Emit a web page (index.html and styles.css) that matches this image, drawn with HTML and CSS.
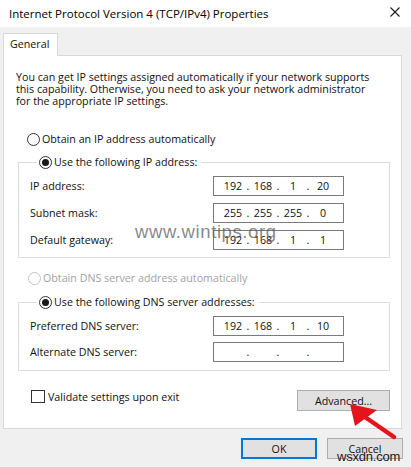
FILE: index.html
```html
<!DOCTYPE html>
<html lang="en">
<head>
<meta charset="utf-8">
<title>Internet Protocol Version 4 (TCP/IPv4) Properties</title>
<link rel="stylesheet" href="styles.css">
</head>
<body>
<div class="window">
  <div class="titlebar">
    <span class="title">Internet Protocol Version 4 (TCP/IPv4) Properties</span>
    <svg class="close" width="10" height="10" viewBox="0 0 10 10"><path d="M0.5 0.5 L9.5 9.5 M9.5 0.5 L0.5 9.5" stroke="#1a1a1a" stroke-width="1.1" fill="none"/></svg>
  </div>
  <div class="content">
    <div class="tabs"><div class="tab">General</div></div>
    <div class="panel">
      <p class="intro">You can get IP settings assigned automatically if your network supports<br>this capability. Otherwise, you need to ask your network administrator<br>for the appropriate IP settings.</p>

      <div class="option first"><span class="radio"></span><span>Obtain an IP address automatically</span></div>

      <fieldset class="group ip-group">
        <legend><span class="radio checked"></span><span>Use the following IP address:</span></legend>
        <div class="row"><span class="label">IP address:</span><div class="ipbox"><span class="oct">192</span><span class="dot">.</span><span class="oct">168</span><span class="dot">.</span><span class="oct">1</span><span class="dot">.</span><span class="oct">20</span></div></div>
        <div class="row"><span class="label">Subnet mask:</span><div class="ipbox"><span class="oct">255</span><span class="dot">.</span><span class="oct">255</span><span class="dot">.</span><span class="oct">255</span><span class="dot">.</span><span class="oct">0</span></div></div>
        <div class="row"><span class="label">Default gateway:</span><div class="ipbox"><span class="oct">192</span><span class="dot">.</span><span class="oct">168</span><span class="dot">.</span><span class="oct">1</span><span class="dot">.</span><span class="oct">1</span></div></div>
      </fieldset>

      <div class="option disabled dns-auto"><span class="radio"></span><span>Obtain DNS server address automatically</span></div>

      <fieldset class="group dns-group">
        <legend><span class="radio checked"></span><span>Use the following DNS server addresses:</span></legend>
        <div class="row"><span class="label">Preferred DNS server:</span><div class="ipbox"><span class="oct">192</span><span class="dot">.</span><span class="oct">168</span><span class="dot">.</span><span class="oct">1</span><span class="dot">.</span><span class="oct">10</span></div></div>
        <div class="row"><span class="label">Alternate DNS server:</span><div class="ipbox"><span class="oct"></span><span class="dot">.</span><span class="oct"></span><span class="dot">.</span><span class="oct"></span><span class="dot">.</span><span class="oct"></span></div></div>
      </fieldset>

      <div class="bottom-row">
        <div class="check-option"><span class="checkbox"></span><span>Validate settings upon exit</span></div>
        <button class="btn advanced">Advanced...</button>
      </div>
    </div>
    <div class="actions">
      <button class="btn default">OK</button>
      <button class="btn">Cancel</button>
    </div>
  </div>

  <span class="watermark wm-site">www.wintips.org</span>
  <span class="watermark wm-corner">wsxdn.com</span>
  <svg class="arrow" width="411" height="467" viewBox="0 0 411 467">
    <line x1="394" y1="437" x2="362" y2="415" stroke="#e3141c" stroke-width="4.5" stroke-linecap="round"/>
    <polygon points="350,404 355,426 377,410" fill="#e3141c"/>
  </svg>
</div>
</body>
</html>
```
FILE: styles.css
```css
* { box-sizing: border-box; }
html, body { margin: 0; padding: 0; }
body {
  width: 411px;
  height: 467px;
  overflow: hidden;
  background: #f0f0f0;
  font-family: "Open Sans", "Noto Sans", "Liberation Sans", sans-serif;
  font-size: 10.7px;
  color: #111;
}
.window {
  position: relative;
  width: 411px;
  height: 467px;
}
.titlebar {
  height: 27px;
  background: #fff;
  display: flex;
  align-items: center;
  justify-content: space-between;
  padding: 0 11px 1px 9px;
}
.title { font-size: 11.5px; color: #000; }
.close { display: block; margin-bottom: 3px; }

.content { padding: 6px 0 0 3px; }
.tabs { display: flex; height: 22px; }
.tab {
  width: 55px;
  height: 23px;
  background: #fff;
  border: 1px solid #d9d9d9;
  border-bottom: none;
  padding: 3px 0 0 6px;
  position: relative;
  z-index: 1;
}
.panel {
  width: 399px;
  height: 374px;
  background: #fff;
  border: 1px solid #d9d9d9;
  padding: 15px 0 0 12px;
}
.intro {
  margin: 0;
  line-height: 12px;
  white-space: nowrap;
}
.option {
  display: flex;
  align-items: center;
  height: 14px;
  gap: 2px;
}
.option.first { margin: 25px 0 0 11px; }
.option.dns-auto { margin: 13px 0 0 12px; }
.option.disabled { color: #a2a2a2; }
.radio {
  width: 13px;
  height: 13px;
  border: 1px solid #333;
  border-radius: 50%;
  display: inline-flex;
  align-items: center;
  justify-content: center;
  flex: none;
  background: #fff;
}
.option.disabled .radio { border-color: #c4c4c4; }
.radio.checked::after {
  content: "";
  width: 7px;
  height: 7px;
  border-radius: 50%;
  background: #1a1a1a;
}
.group {
  margin: 9px 0 0 2px;
  width: 372px;
  border: 1px solid #dcdcdc;
  padding: 7px 0 7px 11px;
  display: flex;
  flex-direction: column;
  gap: 7px;
}
.dns-group { margin-top: 10px; padding-bottom: 8px; gap: 6px; }
.group legend {
  display: flex;
  align-items: center;
  gap: 2px;
  height: 14px;
  padding: 0 4px 0 2px;
  margin-left: 7px;
}
.row {
  display: grid;
  grid-template-columns: 183px 131px;
  align-items: center;
  height: 20px;
}
.ipbox {
  height: 20px;
  border: 1px solid #7a7a7a;
  display: flex;
  align-items: center;
  padding-left: 6px;
  background: #fff;
}
.oct { width: 26px; text-align: center; }
.dot { width: 4px; text-align: center; }

.bottom-row {
  display: flex;
  justify-content: space-between;
  align-items: flex-start;
  margin-top: 19px;
  width: 374px;
}
.check-option {
  display: flex;
  align-items: center;
  gap: 3px;
  margin: 0 0 0 15px;
  height: 13px;
}
.checkbox {
  width: 14px;
  height: 13px;
  border: 1px solid #333;
  background: #fff;
}
.btn {
  font-family: inherit;
  font-size: inherit;
  color: #111;
  background: #e1e1e1;
  border: 1px solid #adadad;
  padding: 0;
  height: 21px;
  margin: 0;
}
.advanced { width: 93px; }
.actions {
  display: flex;
  justify-content: flex-end;
  gap: 10px;
  padding-right: 8px;
  margin-top: 9px;
}
.actions .btn { width: 76px; }
.btn.default { border: 2px solid #0078d7; }

.watermark {
  position: absolute;
  font-family: "Liberation Sans", Arial, sans-serif;
  white-space: nowrap;
}
.wm-site {
  left: 135px;
  top: 221px;
  font-size: 18.5px;
  color: rgba(95, 95, 95, 0.75);
  letter-spacing: 0.6px;
}
.wm-corner {
  left: 337px;
  top: 449px;
  font-size: 13px;
  color: #1a1a1a;
  letter-spacing: -0.2px;
}
.arrow {
  position: absolute;
  left: 0;
  top: 0;
  pointer-events: none;
}
```
